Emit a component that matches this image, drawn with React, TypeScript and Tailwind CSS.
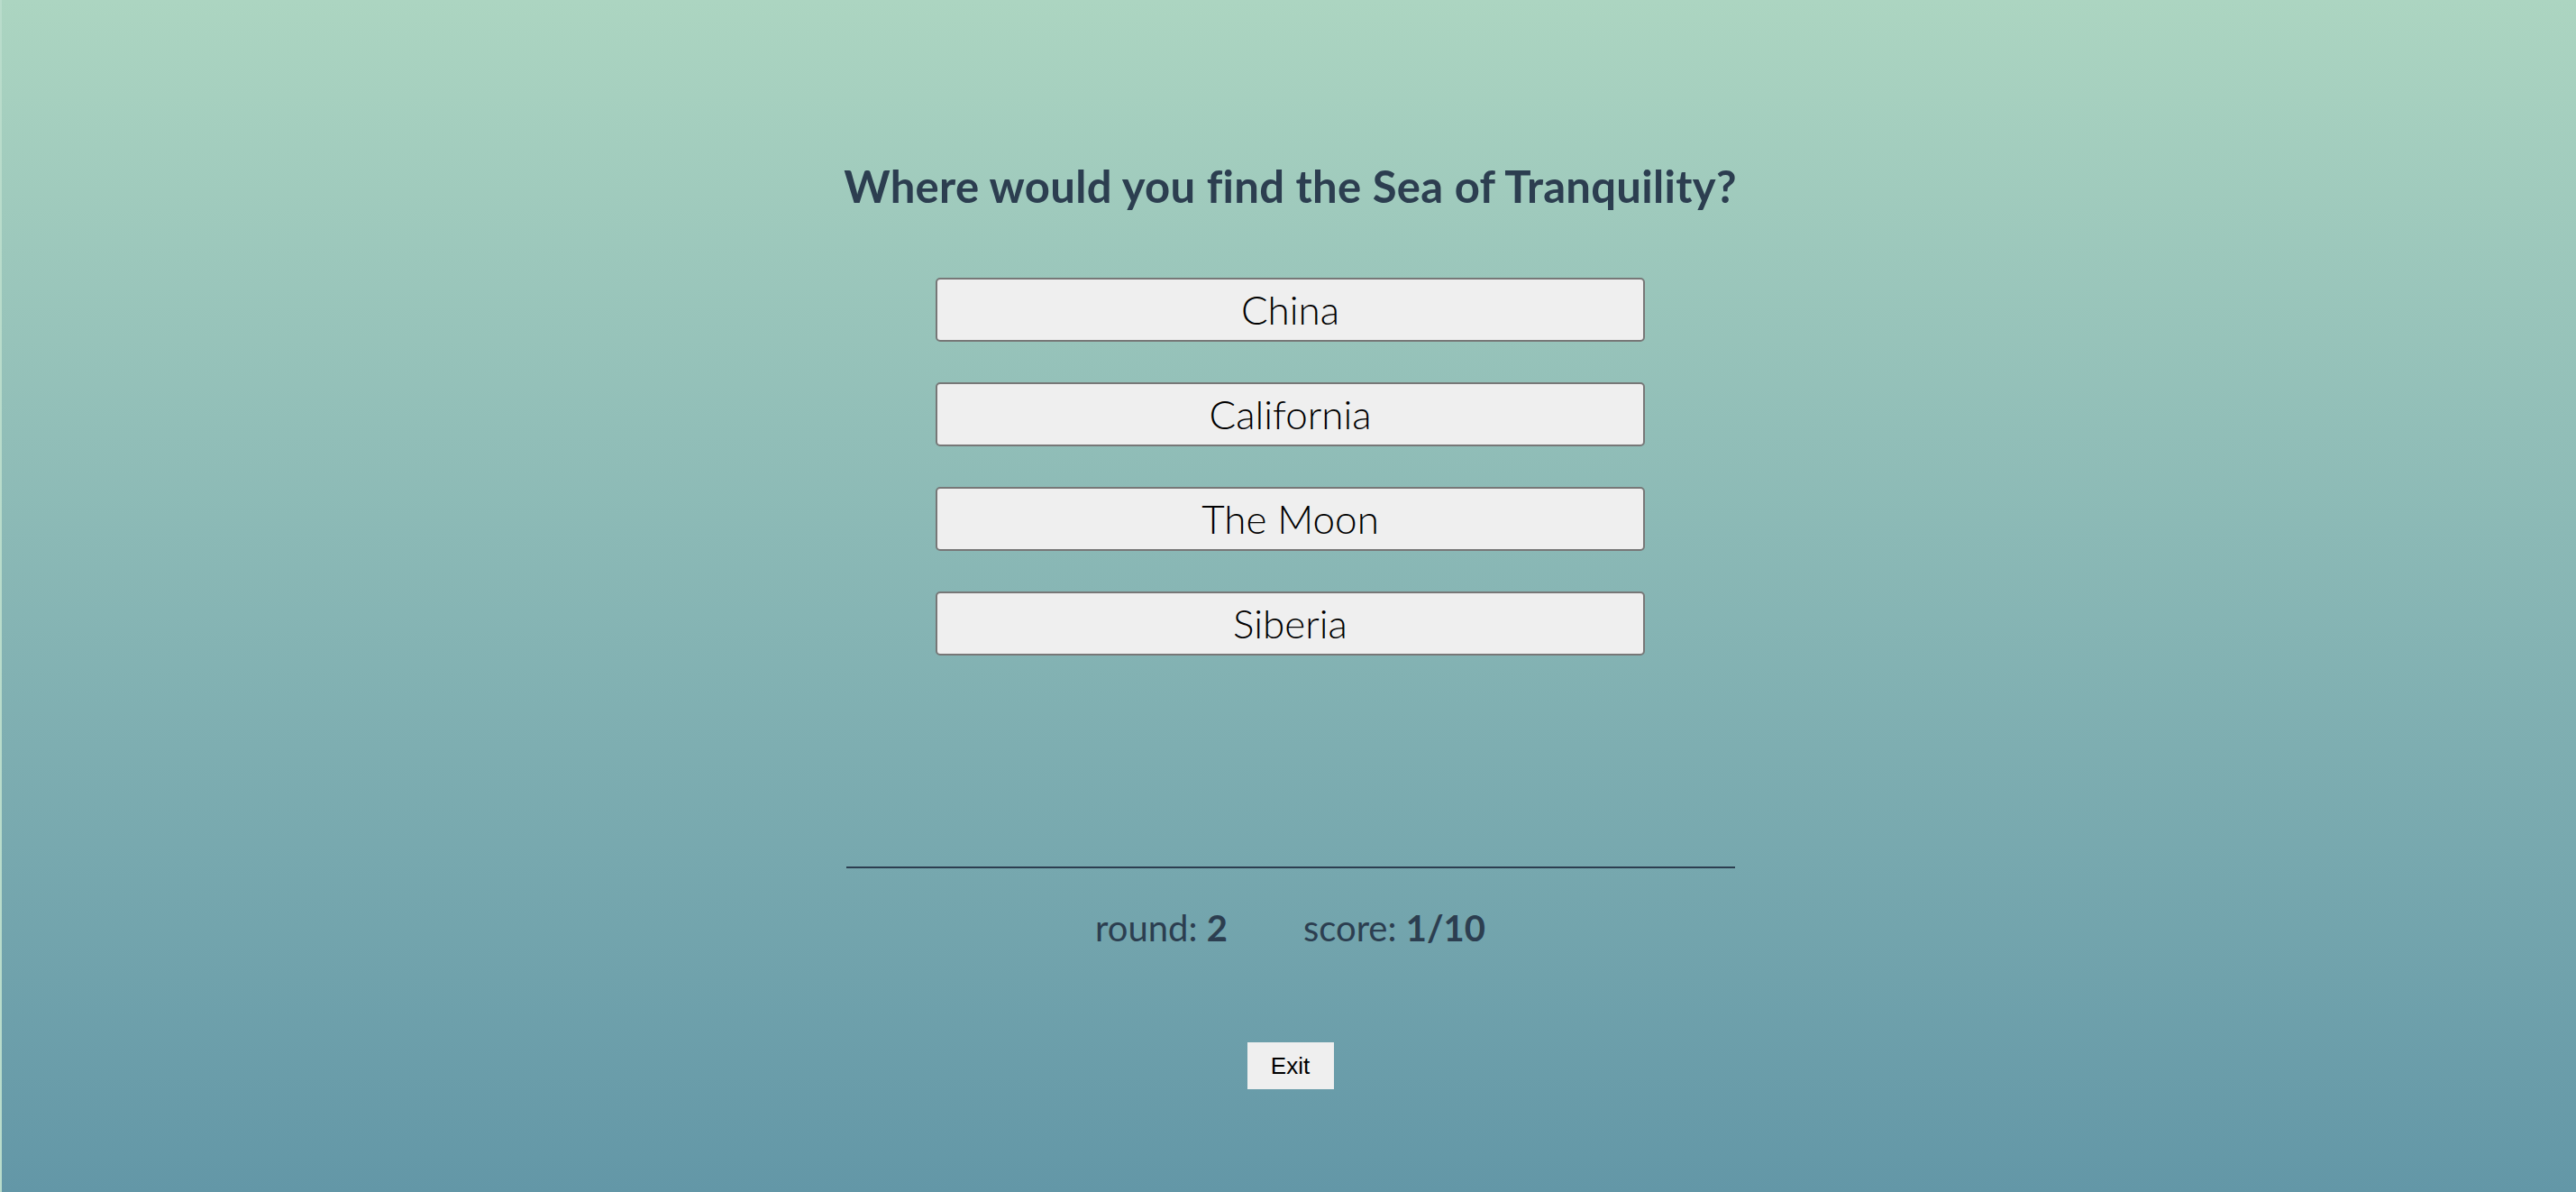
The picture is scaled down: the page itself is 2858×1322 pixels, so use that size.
import React from "react";

const answers = ["China", "California", "The Moon", "Siberia"];

export default function App() {
  return (
    <div
      className="w-full h-[1322px] overflow-hidden flex flex-col items-center pl-[3px] border-l-2 border-[#b9dccb] bg-gradient-to-b from-[#acd5c1] to-[#6397a7] text-[#2c3e50]"
      style={{ fontFamily: "Lato, 'Noto Sans', sans-serif" }}
    >
      <h1 className="mt-[176px] text-[49px] leading-[60px] font-bold tracking-[0.3px]">
        Where would you find the Sea of Tranquility?
      </h1>
      <div className="mt-[72px] flex flex-col gap-[45px]">
        {answers.map((a) => (
          <button
            key={a}
            className="w-[787px] h-[71px] rounded-[5px] border-2 border-[#777777] bg-[#efefef] text-black text-[44px] font-light leading-none pb-[2px]"
            style={{ fontFamily: "Lato, 'Noto Sans', sans-serif" }}
          >
            {a}
          </button>
        ))}
      </div>
      <div className="mt-[234px] w-[986px] h-[2px] bg-[#2c3e50]" />
      <div className="mt-[43px] flex gap-[84px] text-[40px] leading-[46px]">
        <span>
          round: <b className="font-bold">2</b>
        </span>
        <span>
          score: <b className="font-bold">1/10</b>
        </span>
      </div>
      <button
        className="mt-[104px] w-[96px] h-[52px] bg-[#efefef] text-black text-[26px]"
        style={{ fontFamily: "'Liberation Sans', Arial, sans-serif" }}
      >
        Exit
      </button>
    </div>
  );
}
